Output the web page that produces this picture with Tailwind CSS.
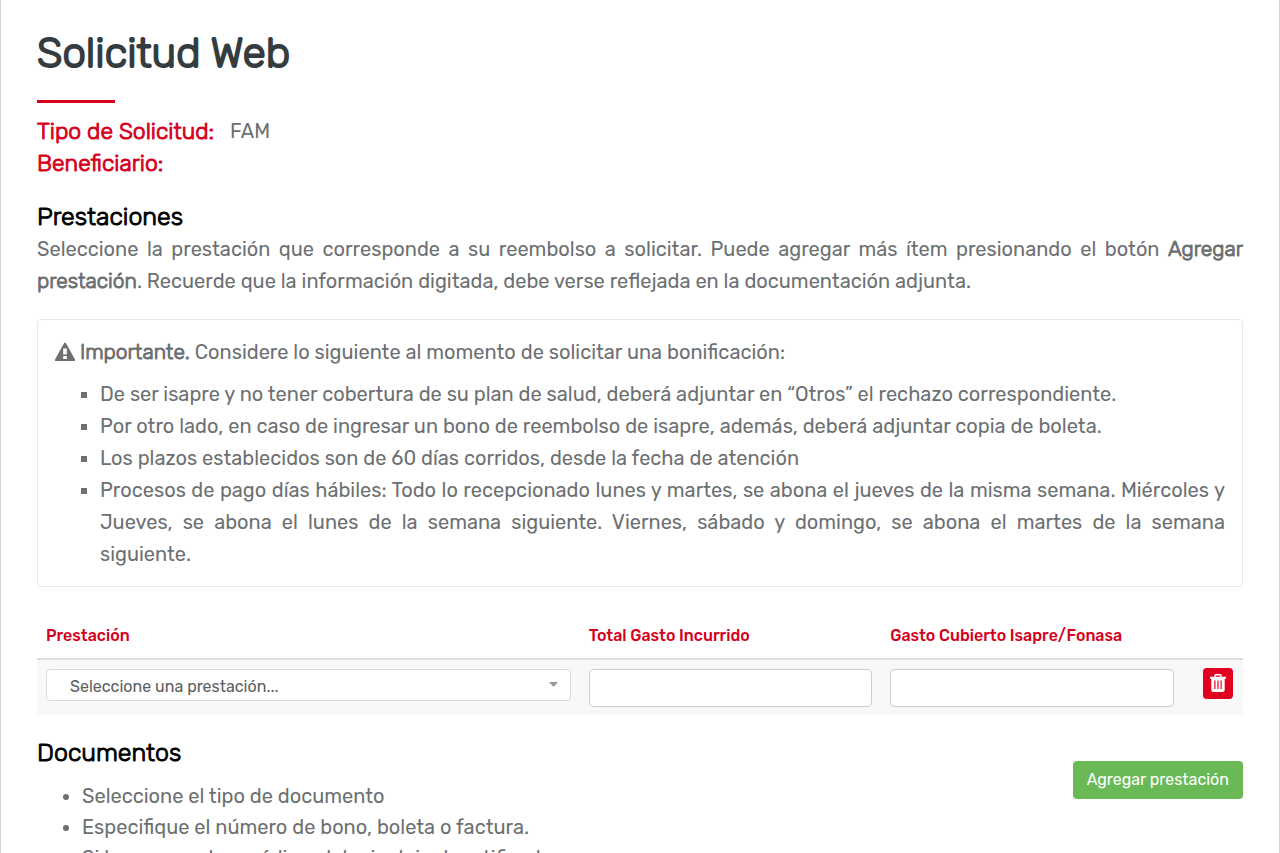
<!DOCTYPE html>
<html lang="es">

<head>
    <meta charset="UTF-8">
    <meta name="viewport" content="width=device-width, initial-scale=1.0">
    <title>Solicitud Web</title>

    <!--Tailwind-->
    <script src="https://cdn.jsdelivr.net/npm/@tailwindcss/browser@4"></script>
</head>

<body class="bg-white overflow-x-hidden font-[Rubik,Roboto,sans-serif] text-xl leading-8 text-[#6c7072]">
    <main class="border-x border-[#d4d4d6] px-9 pt-7 pb-10">

        <!-- Title -->
        <h1 class="text-[42px] leading-[50px] font-light [-webkit-text-stroke:2px] text-[#343c40]">Solicitud Web</h1>
        <div class="w-[78px] h-[3px] bg-[#d6001c] mt-[22px] mb-3"></div>

        <!-- Request data -->
        <dl>
            <div class="flex gap-4 h-8">
                <dt class="text-[23px] font-light [-webkit-text-stroke:1px] text-[#d6001c]">Tipo de Solicitud:</dt>
                <dd>FAM</dd>
            </div>
            <div class="flex gap-4 h-8">
                <dt class="text-[23px] font-light [-webkit-text-stroke:1px] text-[#d6001c]">Beneficiario:</dt>
                <dd></dd>
            </div>
        </dl>

        <!-- Prestaciones Section Start -->
        <section class="mt-[22px]">
            <h2 class="text-[25px] leading-8 font-light [-webkit-text-stroke:1px] text-black">Prestaciones</h2>
            <p class="text-justify">Seleccione la prestación que corresponde a su reembolso a solicitar. Puede agregar más ítem presionando el botón <b class="text-[21px] leading-none font-light [-webkit-text-stroke:1px]">Agregar prestación</b>. Recuerde que la información digitada, debe verse reflejada en la documentación adjunta.</p>

            <div class="mt-[22px] border border-[#e6e7e8] rounded px-[17px] py-4 text-justify">
                <p>
                    <svg class="inline w-5 h-5 mb-1 fill-current" viewBox="0 0 20 20">
                        <path fill-rule="evenodd" d="M9 1.2Q10 0 11 1.2L20 17.5Q20.300 19 19 19H1Q-.300 19 0 17.500ZM8.200 6.500V12.500H11.800V6.500ZM8.200 14V17H11.800V14Z" />
                    </svg>
                    <b class="text-[21px] leading-none font-light [-webkit-text-stroke:1px]">Importante.</b> Considere lo siguiente al momento de solicitar una bonificación:
                </p>
                <ul class="list-[square] pl-[45px] mt-[10px]">
                    <li>De ser isapre y no tener cobertura de su plan de salud, deberá adjuntar en “Otros” el rechazo correspondiente.</li>
                    <li>Por otro lado, en caso de ingresar un bono de reembolso de isapre, además, deberá adjuntar copia de boleta.</li>
                    <li>Los plazos establecidos son de 60 días corridos, desde la fecha de atención</li>
                    <li>Procesos de pago días hábiles: Todo lo recepcionado lunes y martes, se abona el jueves de la misma semana. Miércoles y Jueves, se abona el lunes de la semana siguiente. Viernes, sábado y domingo, se abona el martes de la semana siguiente.&nbsp;</li>
                </ul>
            </div>

            <table class="w-full table-fixed mt-8 text-base leading-6">
                <thead>
                    <tr class="text-left text-[#d6001c] border-b-2 border-[#dcdedf]">
                        <th class="w-[45%] font-medium px-[9px] pt-[5px] pb-[10px]">Prestación</th>
                        <th class="w-[25%] font-medium px-[9px] pt-[5px] pb-[10px]">Total Gasto Incurrido</th>
                        <th class="w-[25%] font-medium px-[9px] pt-[5px] pb-[10px]">Gasto Cubierto Isapre/Fonasa</th>
                        <td class="w-[5%]"></td>
                    </tr>
                </thead>
                <tbody>
                    <tr class="bg-[#f8f8f8] align-top">
                        <td class="px-[9px] pt-[9px] pb-2">
                            <div class="relative">
                                <select aria-label="Prestación" class="block appearance-none w-full h-8 bg-white border border-[#d8dadb] rounded px-[23px] pt-1 text-base text-[#5c5e60]">
                                    <option>Seleccione una prestación...</option>
                                </select>
                                <svg class="absolute right-[13px] top-[13px] w-[9px] h-[5px] fill-[#999] pointer-events-none" viewBox="0 0 9 5">
                                    <path d="M0 0h9L4.500 5z" />
                                </svg>
                            </div>
                        </td>
                        <td class="px-[9px] pt-[9px] pb-2">
                            <input type="text" aria-label="Total Gasto Incurrido" class="block w-full h-[38px] bg-white border border-[#cccfd1] rounded px-3">
                        </td>
                        <td class="px-[9px] pt-[9px] pb-2">
                            <input type="text" aria-label="Gasto Cubierto Isapre/Fonasa" class="block w-full h-[38px] bg-white border border-[#cccfd1] rounded px-3">
                        </td>
                        <td class="pr-[10px] pt-2">
                            <button type="button" aria-label="Eliminar" class="flex items-center justify-center ml-auto w-[30px] h-[31px] rounded bg-[#e1001f]">
                                <svg class="w-4 h-[18px] mb-[2px]" viewBox="0 0 16 18" fill="none">
                                    <path d="M5 3V1.500Q5 .8 5.700 .8h4.600Q11 .8 11 1.500V3" stroke="#fff" stroke-width="1.400" />
                                    <path fill="#fff" fill-rule="evenodd" d="M0 2.700h16v2h-1.300V16q0 2-2 2H3.300q-2 0-2-2V4.700H0ZM4.300 6.500v8.500h1.200V6.500ZM7.400 6.500v8.500h1.200V6.500ZM10.500 6.500v8.500h1.200V6.500Z" />
                                </svg>
                            </button>
                        </td>
                    </tr>
                </tbody>
            </table>
        </section>
        <!-- Prestaciones Section End -->

        <!-- Documentos Section Start -->
        <section class="flex justify-between items-start mt-[22px]">
            <div>
                <h2 class="text-[25px] leading-8 font-light [-webkit-text-stroke:1px] text-black">Documentos</h2>
                <ul class="list-disc pl-[45px] mt-3 leading-[31px]">
                    <li>Seleccione el tipo de documento</li>
                    <li>Especifique el número de bono, boleta o factura.</li>
                    <li>Si hay una orden médica, debe incluir el certificado</li>
                </ul>
            </div>
            <button type="button" class="mt-6 h-[38px] px-[14px] rounded bg-[#69b957] text-base text-white">Agregar prestación</button>
        </section>
        <!-- Documentos Section End -->

    </main>
</body>

</html>
